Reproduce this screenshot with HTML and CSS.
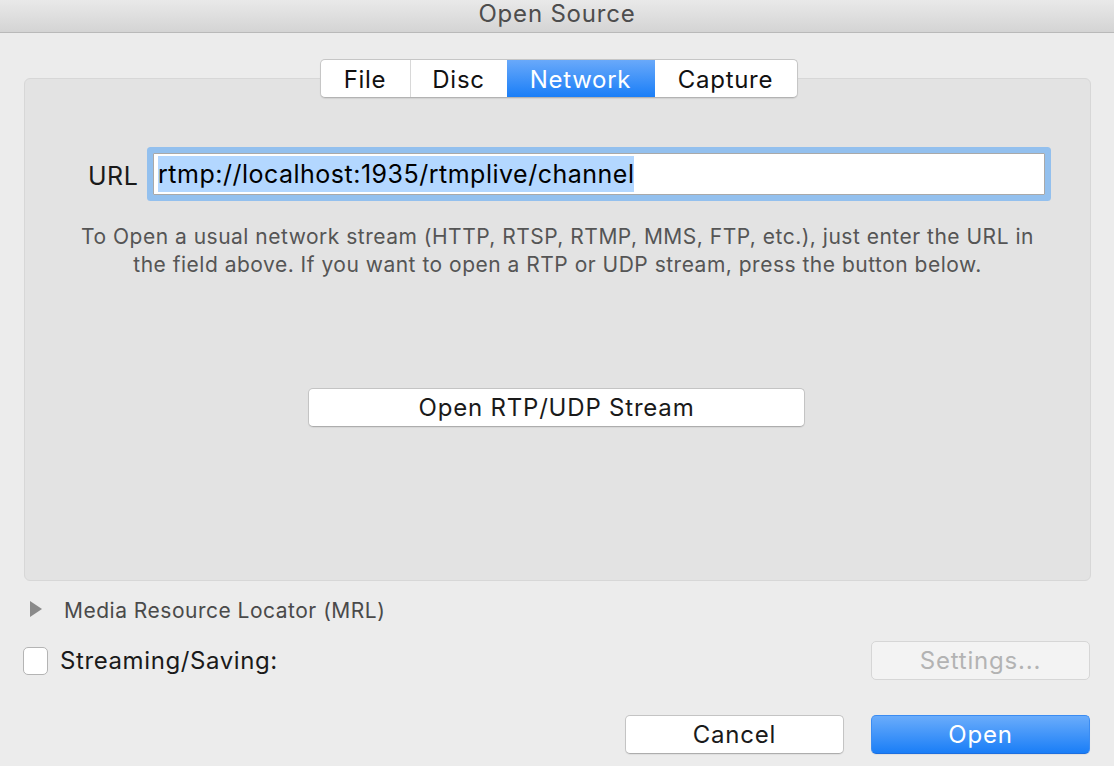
FILE: index.html
```html
<!DOCTYPE html>
<html>
<head>
<meta charset="utf-8">
<link rel="stylesheet" href="styles.css">
</head>
<body>
<div class="window">
  <div class="titlebar">Open Source</div>
  <div class="content">
    <div class="tabs">
      <div class="tab tab-file">File</div>
      <div class="tab tab-disc">Disc</div>
      <div class="tab tab-network active">Network</div>
      <div class="tab tab-capture">Capture</div>
    </div>
    <div class="panel">
      <div class="url-row">
        <span class="url-label">URL</span>
        <div class="url-field"><span class="url-sel">rtmp://localhost:1935/rtmplive/channel</span></div>
      </div>
      <p class="hint">To Open a usual network stream (HTTP, RTSP, RTMP, MMS, FTP, etc.), just enter the URL in<br>the field above. If you want to open a RTP or UDP stream, press the button below.</p>
      <div class="rtp-row"><div class="btn btn-rtp">Open RTP/UDP Stream</div></div>
    </div>
    <div class="mrl-row">
      <span class="disclosure"></span>
      <span class="mrl-label">Media Resource Locator (MRL)</span>
    </div>
    <div class="stream-row">
      <span class="checkbox"></span>
      <span class="stream-label">Streaming/Saving:</span>
      <div class="btn btn-settings">Settings...</div>
    </div>
    <div class="actions">
      <div class="btn btn-cancel">Cancel</div>
      <div class="btn btn-open">Open</div>
    </div>
  </div>
</div>
</body>
</html>
```
FILE: styles.css
```css
* { box-sizing: border-box; }
html, body {
  margin: 0;
  padding: 0;
}
body {
  width: 1114px;
  height: 766px;
  overflow: hidden;
  background: #ececec;
  font-family: Inter, "Liberation Sans", Arial, sans-serif;
  color: #1a1a1a;
}
.window {
  display: flex;
  flex-direction: column;
  height: 766px;
}
.titlebar {
  flex-shrink: 0;
  height: 33px;
  border-bottom: 1px solid #b9b9b9;
  background: linear-gradient(#e9e9e9, #d4d4d4);
  text-align: center;
  font-size: 24px;
  letter-spacing: 0.8px;
  line-height: 27px;
  color: #4d4d4d;
}
.content {
  flex-shrink: 0;
  padding: 26px 23px 0 24px;
  display: flex;
  flex-direction: column;
}
.tabs {
  align-self: center;
  display: flex;
  height: 39px;
  border: 1px solid #c6c6c6;
  border-bottom-color: #b3b3b3;
  border-radius: 5px;
  background: #fff;
  margin-bottom: -20px;
  margin-left: 2px;
  position: relative;
  z-index: 2;
  box-shadow: 0 1px 1px rgba(0,0,0,0.08);
  overflow: hidden;
}
.tab {
  font-size: 24px;
  letter-spacing: 0.7px;
  line-height: 39px;
  text-align: center;
  color: #111;
}
.tab-file { width: 90px; border-right: 1px solid #d8d8d8; }
.tab-disc { width: 96px; }
.tab-network { width: 148px; }
.tab-capture { width: 142px; }
.tab.active {
  background: linear-gradient(#69a9fa, #1a7ef7);
  color: #fff;
}
.panel {
  height: 503px;
  background: #e3e3e3;
  border: 1px solid #d7d7d7;
  border-radius: 6px;
  padding-top: 74px;
  display: flex;
  flex-direction: column;
}
.url-row {
  display: flex;
  align-items: center;
  padding-left: 63px;
}
.url-label {
  font-size: 25px;
  letter-spacing: 0.5px;
  width: 65px;
  padding-top: 4px;
  color: #1a1a1a;
}
.url-field {
  width: 892px;
  height: 42px;
  background: #fff;
  border: 1px solid #a9a9a9;
  box-shadow: 0 0 0 6px #93c0ee;
  border-radius: 1px;
  display: flex;
  align-items: center;
  padding-left: 4px;
}
.url-sel {
  background: #b3d7ff;
  font-size: 25px;
  letter-spacing: 0.5px;
  line-height: 35px;
  padding-top: 1px;
  color: #000;
}
.hint {
  margin: 28px 0 0 0;
  text-align: center;
  font-size: 21px;
  letter-spacing: 0.5px;
  line-height: 28px;
  color: #555;
}
.rtp-row {
  display: flex;
  justify-content: center;
  margin-top: 109px;
  padding-right: 2px;
}
.btn {
  height: 39px;
  background: #fff;
  border: 1px solid #c4c4c4;
  border-bottom-color: #adadad;
  border-radius: 5px;
  text-align: center;
  font-size: 24px;
  letter-spacing: 0.8px;
  line-height: 38px;
  color: #1a1a1a;
  box-shadow: 0 1px 1px rgba(0,0,0,0.06);
}
.btn-rtp { width: 497px; }
.mrl-row {
  flex-shrink: 0;
  display: flex;
  align-items: center;
  height: 28px;
  margin-top: 14px;
  padding-left: 6px;
}
.disclosure {
  width: 0;
  height: 0;
  border-left: 12px solid #8a8a8a;
  border-top: 8px solid transparent;
  border-bottom: 8px solid transparent;
}
.mrl-label {
  margin-left: 22px;
  font-size: 21px;
  letter-spacing: 0.5px;
  padding-top: 2px;
  color: #4a4a4a;
}
.stream-row {
  flex-shrink: 0;
  display: flex;
  align-items: center;
  margin-top: 18px;
  height: 39px;
  padding-right: 1px;
}
.checkbox {
  width: 25px;
  height: 28px;
  background: #fff;
  border: 1px solid #b4b4b4;
  border-radius: 5px;
  margin-left: -1px;
}
.stream-label {
  margin-left: 12px;
  font-size: 24px;
  letter-spacing: 0.6px;
  color: #1a1a1a;
}
.btn-settings {
  margin-left: auto;
  width: 219px;
  background: #f3f3f3;
  border-color: #d6d6d6;
  color: #b3b3b3;
  box-shadow: none;
}
.actions {
  flex-shrink: 0;
  display: flex;
  justify-content: flex-end;
  gap: 27px;
  margin-top: 35px;
  padding-right: 1px;
}
.btn-cancel { width: 219px; }
.btn-open {
  width: 219px;
  background: linear-gradient(#6aacfb, #1a7ef7);
  border-color: #3b8cf2;
  border-bottom-color: #1c6fe0;
  color: #fff;
}
```
